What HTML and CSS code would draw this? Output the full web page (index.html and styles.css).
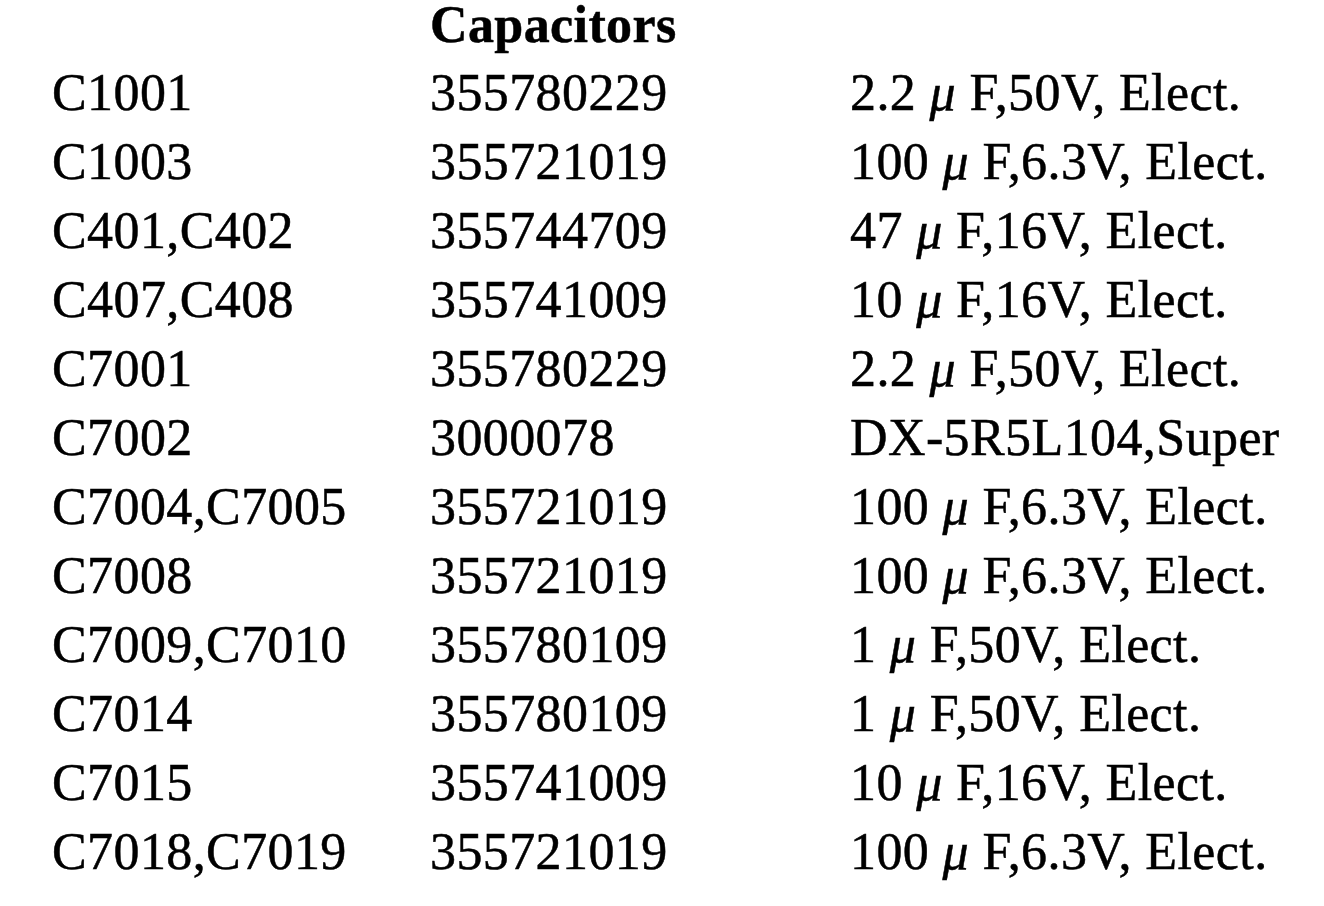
FILE: index.html
```html
<!DOCTYPE html>
<html>
<head>
<meta charset="utf-8">
<link rel="stylesheet" href="styles.css">
</head>
<body>
<div class="sheet">
  <div class="title-row">
    <span></span>
    <span class="title">Capacitors</span>
    <span></span>
  </div>
  <div class="table">
    <span>C1001</span><span>355780229</span><span>2.2 <i class="mu">μ</i> F,50V, Elect.</span>
    <span>C1003</span><span>355721019</span><span>100 <i class="mu">μ</i> F,6.3V, Elect.</span>
    <span>C401,C402</span><span>355744709</span><span>47 <i class="mu">μ</i> F,16V, Elect.</span>
    <span>C407,C408</span><span>355741009</span><span>10 <i class="mu">μ</i> F,16V, Elect.</span>
    <span>C7001</span><span>355780229</span><span>2.2 <i class="mu">μ</i> F,50V, Elect.</span>
    <span>C7002</span><span>3000078</span><span>DX-5R5L104,Super</span>
    <span>C7004,C7005</span><span>355721019</span><span>100 <i class="mu">μ</i> F,6.3V, Elect.</span>
    <span>C7008</span><span>355721019</span><span>100 <i class="mu">μ</i> F,6.3V, Elect.</span>
    <span>C7009,C7010</span><span>355780109</span><span>1 <i class="mu">μ</i> F,50V, Elect.</span>
    <span>C7014</span><span>355780109</span><span>1 <i class="mu">μ</i> F,50V, Elect.</span>
    <span>C7015</span><span>355741009</span><span>10 <i class="mu">μ</i> F,16V, Elect.</span>
    <span>C7018,C7019</span><span>355721019</span><span>100 <i class="mu">μ</i> F,6.3V, Elect.</span>
  </div>
</div>
</body>
</html>
```
FILE: styles.css
```css
html, body {
  margin: 0;
  padding: 0;
  background: #ffffff;
}
body {
  font-family: "Liberation Serif", "Times New Roman", serif;
  font-size: 52px;
  letter-spacing: 0.4px;
  color: #000;
  white-space: nowrap;
  -webkit-text-stroke: 0.5px #000;
}
.sheet {
  padding-left: 52px;
  width: 1272px;
}
.title-row,
.table {
  display: grid;
  grid-template-columns: 378px 420px 1fr;
}
.title-row {
  line-height: 49px;
  margin-bottom: 9px;
}
.title {
  font-weight: bold;
}
.table {
  line-height: 69px;
}
.mu {
  font-style: italic;
}
```
